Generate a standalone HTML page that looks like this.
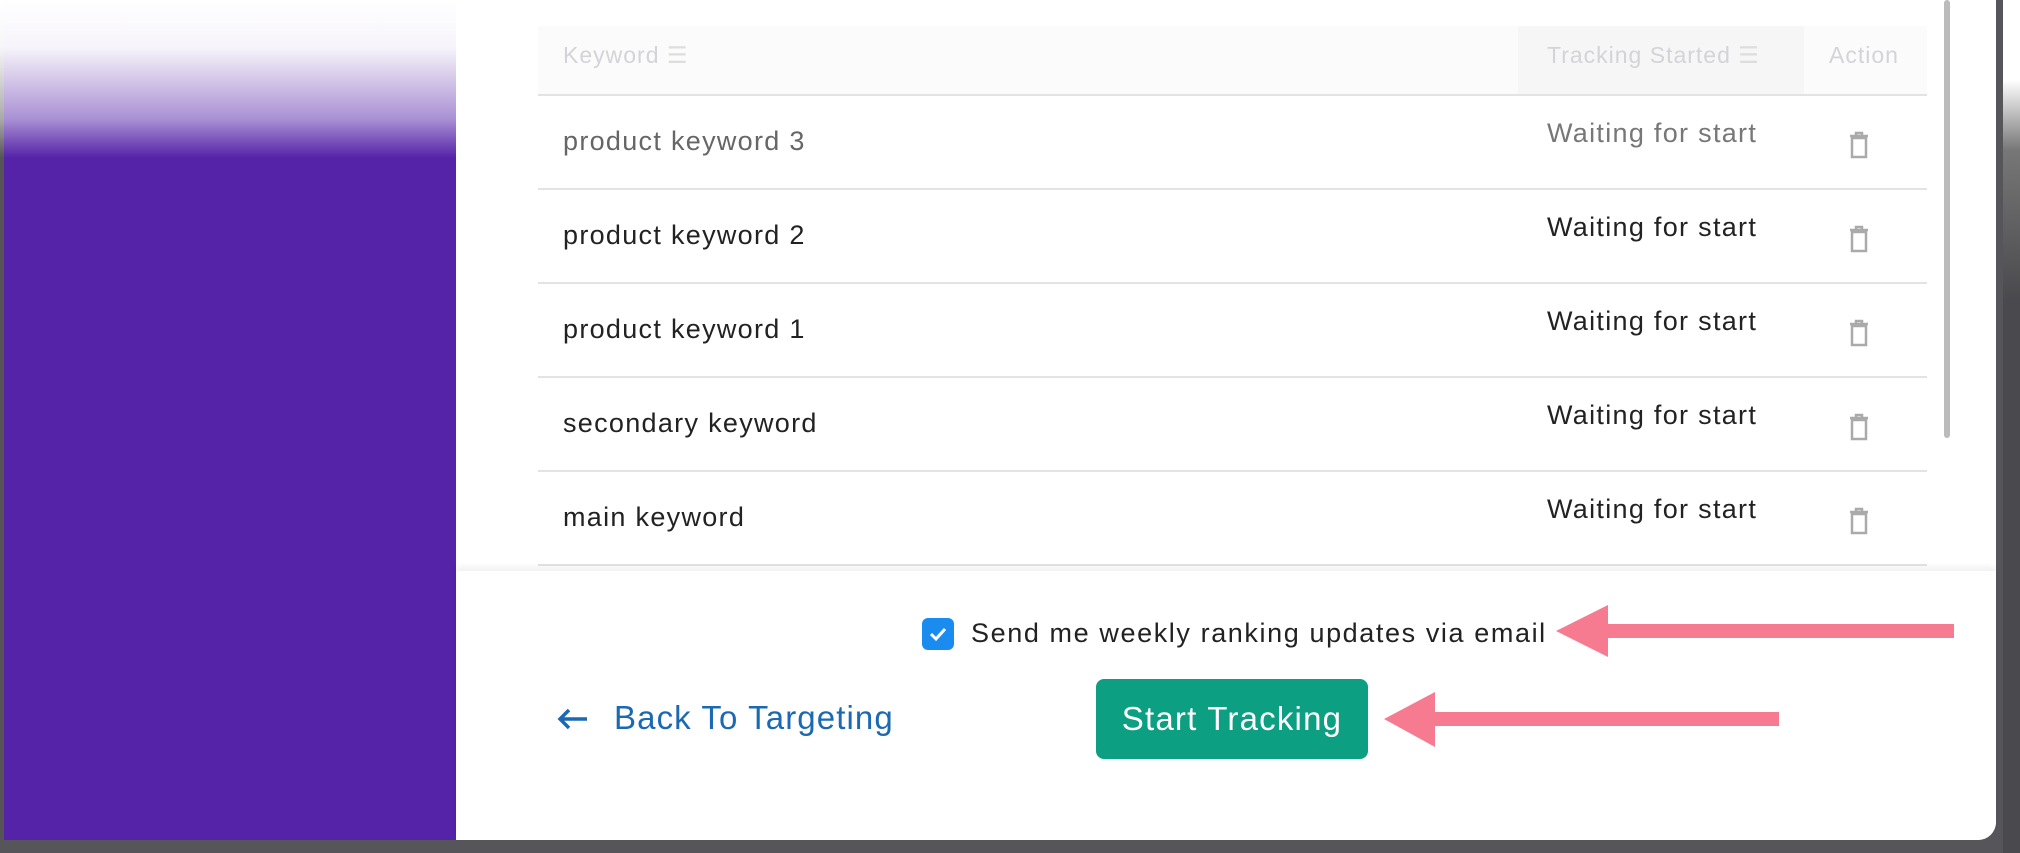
<!DOCTYPE html>
<html><head><meta charset="utf-8"><style>
*{margin:0;padding:0;box-sizing:border-box}
body{width:2020px;height:853px;overflow:hidden;background:#55555a;font-family:"Liberation Sans",sans-serif;position:relative}
.abs{position:absolute}
#purple{left:0;top:0;width:456px;height:840px;background:#5523a8;border-left:4px solid #555}
#modal{left:456px;top:0;width:1540px;height:840px;background:#fff;border-bottom-right-radius:18px}
.row{position:absolute;left:538px;width:1389px;height:94px;border-top:2px solid #e3e3e6}
.kw{position:absolute;left:25px;top:30px;font-size:27px;letter-spacing:1.3px;color:#222}
.st{position:absolute;left:1009px;top:22px;font-size:27px;letter-spacing:1.3px;color:#222}
.tr{position:absolute;left:1310px;top:34px;width:22px;height:30px}
#fade{left:0;top:0;width:456px;height:158px;background:linear-gradient(#fff 0%,rgba(255,255,255,.95) 30%,rgba(255,255,255,.5) 75%,rgba(255,255,255,0) 100%)}
.hd{font-size:23px;letter-spacing:1px;color:#d4d4d8}
</style></head><body>
<div id="purple" class="abs"></div>
<div id="modal" class="abs"></div>
<div class="abs" style="left:2003px;top:0;width:17px;height:853px;background:linear-gradient(#fff 0,#fff 80px,#777 150px,#4a4a4e 300px)"></div>
<div class="abs" style="left:538px;top:26px;width:1389px;height:68px;background:#fbfbfb"></div>
<div class="abs" style="left:1518px;top:26px;width:286px;height:68px;background:#f6f6f7"></div>
<div class="abs hd" style="left:563px;top:42px">Keyword <span style="color:#ddd">☰</span></div>
<div class="abs hd" style="left:1547px;top:42px">Tracking Started <span style="color:#ddd">☰</span></div>
<div class="abs hd" style="left:1829px;top:42px">Action</div>

<div class="row" style="top:94px"><div class="kw" style="color:#666">product keyword 3</div><div class="st" style="color:#777">Waiting for start</div><svg class="tr" viewBox="0 0 22 30"><path d="M4 8h14v19H4zM2 6h18M8 6V3h6v3" fill="none" stroke="#aaa" stroke-width="2.5"/></svg></div>
<div class="row" style="top:188px"><div class="kw">product keyword 2</div><div class="st">Waiting for start</div><svg class="tr" viewBox="0 0 22 30"><path d="M4 8h14v19H4zM2 6h18M8 6V3h6v3" fill="none" stroke="#aaa" stroke-width="2.5"/></svg></div>
<div class="row" style="top:282px"><div class="kw">product keyword 1</div><div class="st">Waiting for start</div><svg class="tr" viewBox="0 0 22 30"><path d="M4 8h14v19H4zM2 6h18M8 6V3h6v3" fill="none" stroke="#aaa" stroke-width="2.5"/></svg></div>
<div class="row" style="top:376px"><div class="kw">secondary keyword</div><div class="st">Waiting for start</div><svg class="tr" viewBox="0 0 22 30"><path d="M4 8h14v19H4zM2 6h18M8 6V3h6v3" fill="none" stroke="#aaa" stroke-width="2.5"/></svg></div>
<div class="row" style="top:470px"><div class="kw">main keyword</div><div class="st">Waiting for start</div><svg class="tr" viewBox="0 0 22 30"><path d="M4 8h14v19H4zM2 6h18M8 6V3h6v3" fill="none" stroke="#aaa" stroke-width="2.5"/></svg></div>
<div class="abs" style="left:538px;top:564px;width:1389px;height:2px;background:#e3e3e6"></div>
<div class="abs" style="left:1944px;top:0;width:6px;height:438px;background:#bbb;border-radius:3px"></div>
<div id="fade" class="abs"></div>

<div class="abs" style="left:456px;top:571px;width:1540px;height:269px;background:#fff;box-shadow:0 -4px 6px rgba(0,0,0,.06);border-bottom-right-radius:18px"></div>
<div class="abs" style="left:922px;top:618px;width:32px;height:32px;background:#1a8cf0;border-radius:6px"><svg width="32" height="32"><path d="M9 16l5 5 9-10" fill="none" stroke="#fff" stroke-width="3"/></svg></div>
<div class="abs" style="left:971px;top:618px;font-size:27px;letter-spacing:1.6px;color:#222">Send me weekly ranking updates via email</div>
<svg class="abs" style="left:555px;top:706px" width="34" height="26"><path d="M32 13H5M14 4L5 13l9 9" fill="none" stroke="#1b69b3" stroke-width="3.5"/></svg>
<div class="abs" style="left:614px;top:699px;font-size:33px;letter-spacing:1.1px;color:#1b69b3">Back To Targeting</div>
<div class="abs" style="left:1096px;top:679px;width:272px;height:80px;background:#0c9f82;border-radius:8px;color:#fff;font-size:33px;letter-spacing:1.2px;text-align:center;line-height:80px">Start Tracking</div>
<svg class="abs" style="left:0;top:0" width="2020" height="853"><g fill="#f77b90"><path d="M1556 631L1608 605V624H1954V638H1608V657Z"/><path d="M1384 719L1435 692V712H1779V726H1435V747Z"/></g></svg>
</body></html>
